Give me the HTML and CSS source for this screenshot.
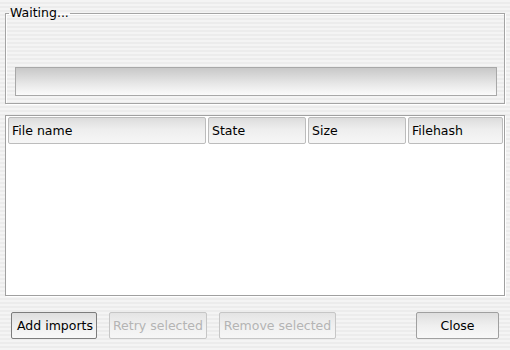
FILE: index.html
```html
<!DOCTYPE html>
<html lang="en">
<head>
    <meta charset="UTF-8">
    <title>Import files</title>
    <link rel="stylesheet" href="styles.css">
</head>
<body>
    <div class="dialog">
        <fieldset class="group">
            <legend>Waiting...</legend>
            <div class="progress"></div>
        </fieldset>

        <div class="table">
            <div class="header">
                <div class="col col-name">File name</div>
                <div class="col col-state">State</div>
                <div class="col col-size">Size</div>
                <div class="col col-hash">Filehash</div>
            </div>
            <div class="rows"></div>
        </div>

        <div class="buttons">
            <button class="btn btn-add focus">Add imports</button>
            <button class="btn btn-retry" disabled>Retry selected</button>
            <button class="btn btn-remove" disabled>Remove selected</button>
            <span class="spacer"></span>
            <button class="btn btn-close">Close</button>
        </div>
    </div>
</body>
</html>
```

FILE: styles.css
```css
html, body {
    margin: 0;
    padding: 0;
}
body {
    width: 510px;
    height: 350px;
    overflow: hidden;
    font-family: "DejaVu Sans", sans-serif;
    font-size: 12.5px;
    color: #000;
    background: repeating-linear-gradient(#f4f4f4 0 2px, #ececec 2px 4px);
}
.dialog {
    padding: 6px 5px 0 5px;
}
.group {
    margin: 0;
    padding: 0 7px 7px 9px;
    border: 1px solid #a4a4a4;
    box-shadow: inset 1px 1px 0 #fff, 1px 1px 0 #fff;
    min-width: 0;
}
.group legend {
    padding: 0 1px;
    margin-left: -6px;
    line-height: 14px;
}
.progress {
    margin-top: 47px;
    height: 27px;
    border: 1px solid #a8a8a8;
    background: linear-gradient(#c8c8c8, #e8e8e8 60%, #fbfbfb);
}
.table {
    margin-top: 11px;
    height: 178px;
    border: 1px solid #a0a0a0;
    background: #fff;
    padding: 1px 1px 0 2px;
    box-shadow: 1px 1px 0 #fff;
}
.header {
    display: flex;
    gap: 2px;
}
.col {
    box-sizing: border-box;
    height: 27px;
    line-height: 25px;
    padding-left: 3px;
    border: 1px solid #bcbcbc;
    border-radius: 2px;
    background: linear-gradient(#dcdcdc, #eeeeee 45%, #f6f6f6);
    white-space: nowrap;
    overflow: hidden;
}
.col-name { width: 198px; }
.col-state { width: 98px; }
.col-size { width: 98px; }
.col-hash { width: 95px; }
.buttons {
    display: flex;
    gap: 12px;
    margin: 16px 6px 0 6px;
}
.spacer {
    flex: 1;
}
.btn {
    box-sizing: border-box;
    height: 27px;
    padding: 0;
    font-family: "DejaVu Sans", sans-serif;
    font-size: 12.5px;
    color: #000;
    border: 1px solid #a0a0a0;
    border-radius: 2px;
    background: linear-gradient(#dedede, #efefef 50%, #f8f8f8);
    white-space: nowrap;
    overflow: hidden;
}
.btn:disabled {
    color: #b4b4b4;
    border-color: #c6c6c6;
    background: linear-gradient(#e4e4e4, #f0f0f0 50%, #f6f6f6);
}
.btn.focus {
    border-color: #7c7c7c;
}
.btn-add {
    width: 86px;
    text-align: left;
    padding-left: 5px;
}
.btn-retry { width: 98px; }
.btn-remove { width: 117px; }
.btn-close { width: 83px; }
```
